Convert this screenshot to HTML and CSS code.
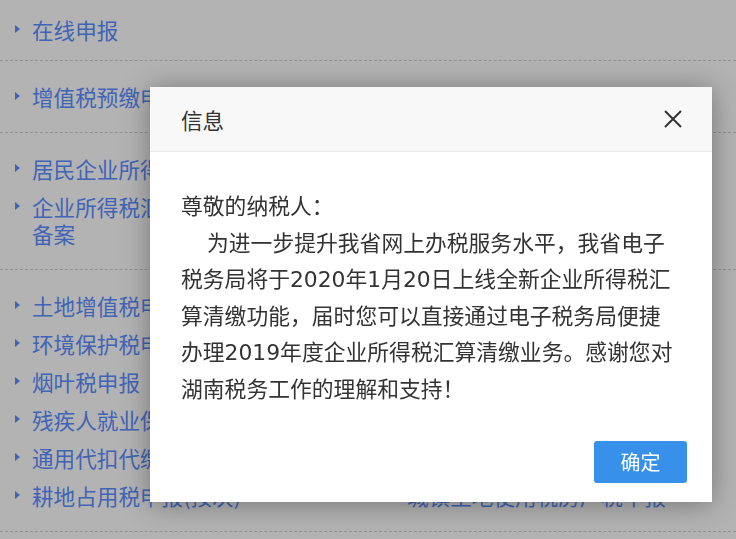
FILE: index.html
```html
<!DOCTYPE html>
<html lang="zh-CN">
<head>
<meta charset="utf-8">
<title>信息</title>
<link rel="stylesheet" href="styles.css">
</head>
<body>
<div class="page">
  <section class="group group-first">
    <ul class="links">
      <li>在线申报</li>
    </ul>
  </section>
  <section class="group">
    <ul class="links">
      <li>增值税预缴申报</li>
    </ul>
  </section>
  <section class="group">
    <ul class="links links-narrow">
      <li>居民企业所得税月（季）度申报</li>
      <li>企业所得税汇总纳税总分支机构信息备案</li>
    </ul>
  </section>
  <section class="group">
    <ul class="links links-grid">
      <li>土地增值税申报</li>
      <li>城镇土地使用税申报</li>
      <li>环境保护税申报</li>
      <li>房产税申报</li>
      <li>烟叶税申报</li>
      <li>车船税申报</li>
      <li>残疾人就业保障金申报</li>
      <li>印花税申报</li>
      <li>通用代扣代缴申报</li>
      <li>资源税申报</li>
      <li>耕地占用税申报(按次)</li>
      <li>城镇土地使用税房产税申报</li>
    </ul>
  </section>
</div>

<div class="dialog" role="dialog">
  <div class="dialog-header">
    <span class="dialog-title">信息</span>
    <span class="dialog-close">
      <svg width="18" height="18" viewBox="0 0 18 18"><path d="M1 1 L17 17 M17 1 L1 17" stroke="#333" stroke-width="2" fill="none"/></svg>
    </span>
  </div>
  <div class="dialog-body">
    <p class="greeting">尊敬的纳税人：</p>
    <p class="message">为进一步提升我省网上办税服务水平，我省电子<br>税务局将于<span class="num">2020</span>年<span class="num">1</span>月<span class="num">20</span>日上线全新企业所得税汇<br>算清缴功能，届时您可以直接通过电子税务局便捷<br>办理<span class="num">2019</span>年度企业所得税汇算清缴业务。感谢您对<br>湖南税务工作的理解和支持！</p>
  </div>
  <div class="dialog-footer">
    <button class="btn-primary" type="button">确定</button>
  </div>
</div>
</body>
</html>
```

FILE: styles.css
```css
html, body {
  margin: 0;
  padding: 0;
}
body {
  background: #b3b3b3;
  font-family: "Noto Sans CJK SC", "Noto Sans", sans-serif;
  width: 736px;
  height: 539px;
  overflow: hidden;
}
.page {
  width: 736px;
}
.group {
  padding: 22px 0 22px;
  border-bottom: 1px dashed #929292;
}
.group-first {
  padding: 16px 0 17px;
}
.links {
  list-style: none;
  margin: 0;
  padding: 0;
  display: flex;
  flex-direction: column;
  gap: 11px;
}
.links li {
  display: flex;
  align-items: flex-start;
  padding-left: 15px;
  font-size: 21.6px;
  line-height: 27px;
  color: #4164b6;
  white-space: nowrap;
}
.links li::before {
  content: "";
  flex: none;
  width: 0;
  height: 0;
  border-left: 5px solid #4164b6;
  border-top: 4px solid transparent;
  border-bottom: 4px solid transparent;
  margin: 9px 12px 0 0;
}
.links-narrow li {
  white-space: normal;
  width: 380px;
}
.links-grid {
  display: grid;
  grid-template-columns: 364px 1fr;
  row-gap: 11px;
}

.dialog {
  position: fixed;
  left: 150px;
  top: 87px;
  width: 562px;
  background: #fff;
  box-shadow: 0 2px 26px rgba(0, 0, 0, 0.35);
  color: #333;
}
.dialog-header {
  height: 65px;
  box-sizing: border-box;
  background: #f8f8f8;
  border-bottom: 1px solid #eaeaea;
  display: flex;
  align-items: center;
  justify-content: space-between;
  padding: 0 30px 0 31px;
}
.dialog-title {
  font-size: 21.6px;
  color: #333;
}
.dialog-close {
  display: flex;
  width: 18px;
  height: 18px;
}
.dialog-body {
  padding: 35px 31px 0;
  font-size: 21.8px;
  line-height: 36.6px;
  color: #333;
}
.dialog-body p {
  margin: 0;
}
.num {
  font-family: "DejaVu Sans", "Noto Sans CJK SC", sans-serif;
  line-height: 1;
}
.message {
  text-indent: 26px;
  white-space: nowrap;
}
.dialog-footer {
  display: flex;
  justify-content: flex-end;
  padding: 34px 25px 19px;
}
.btn-primary {
  width: 93px;
  height: 42px;
  border: 0;
  border-radius: 3px;
  background: #3790e9;
  color: #fff;
  font-family: "Noto Sans CJK SC", sans-serif;
  font-size: 20px;
  padding: 0;
}
```
